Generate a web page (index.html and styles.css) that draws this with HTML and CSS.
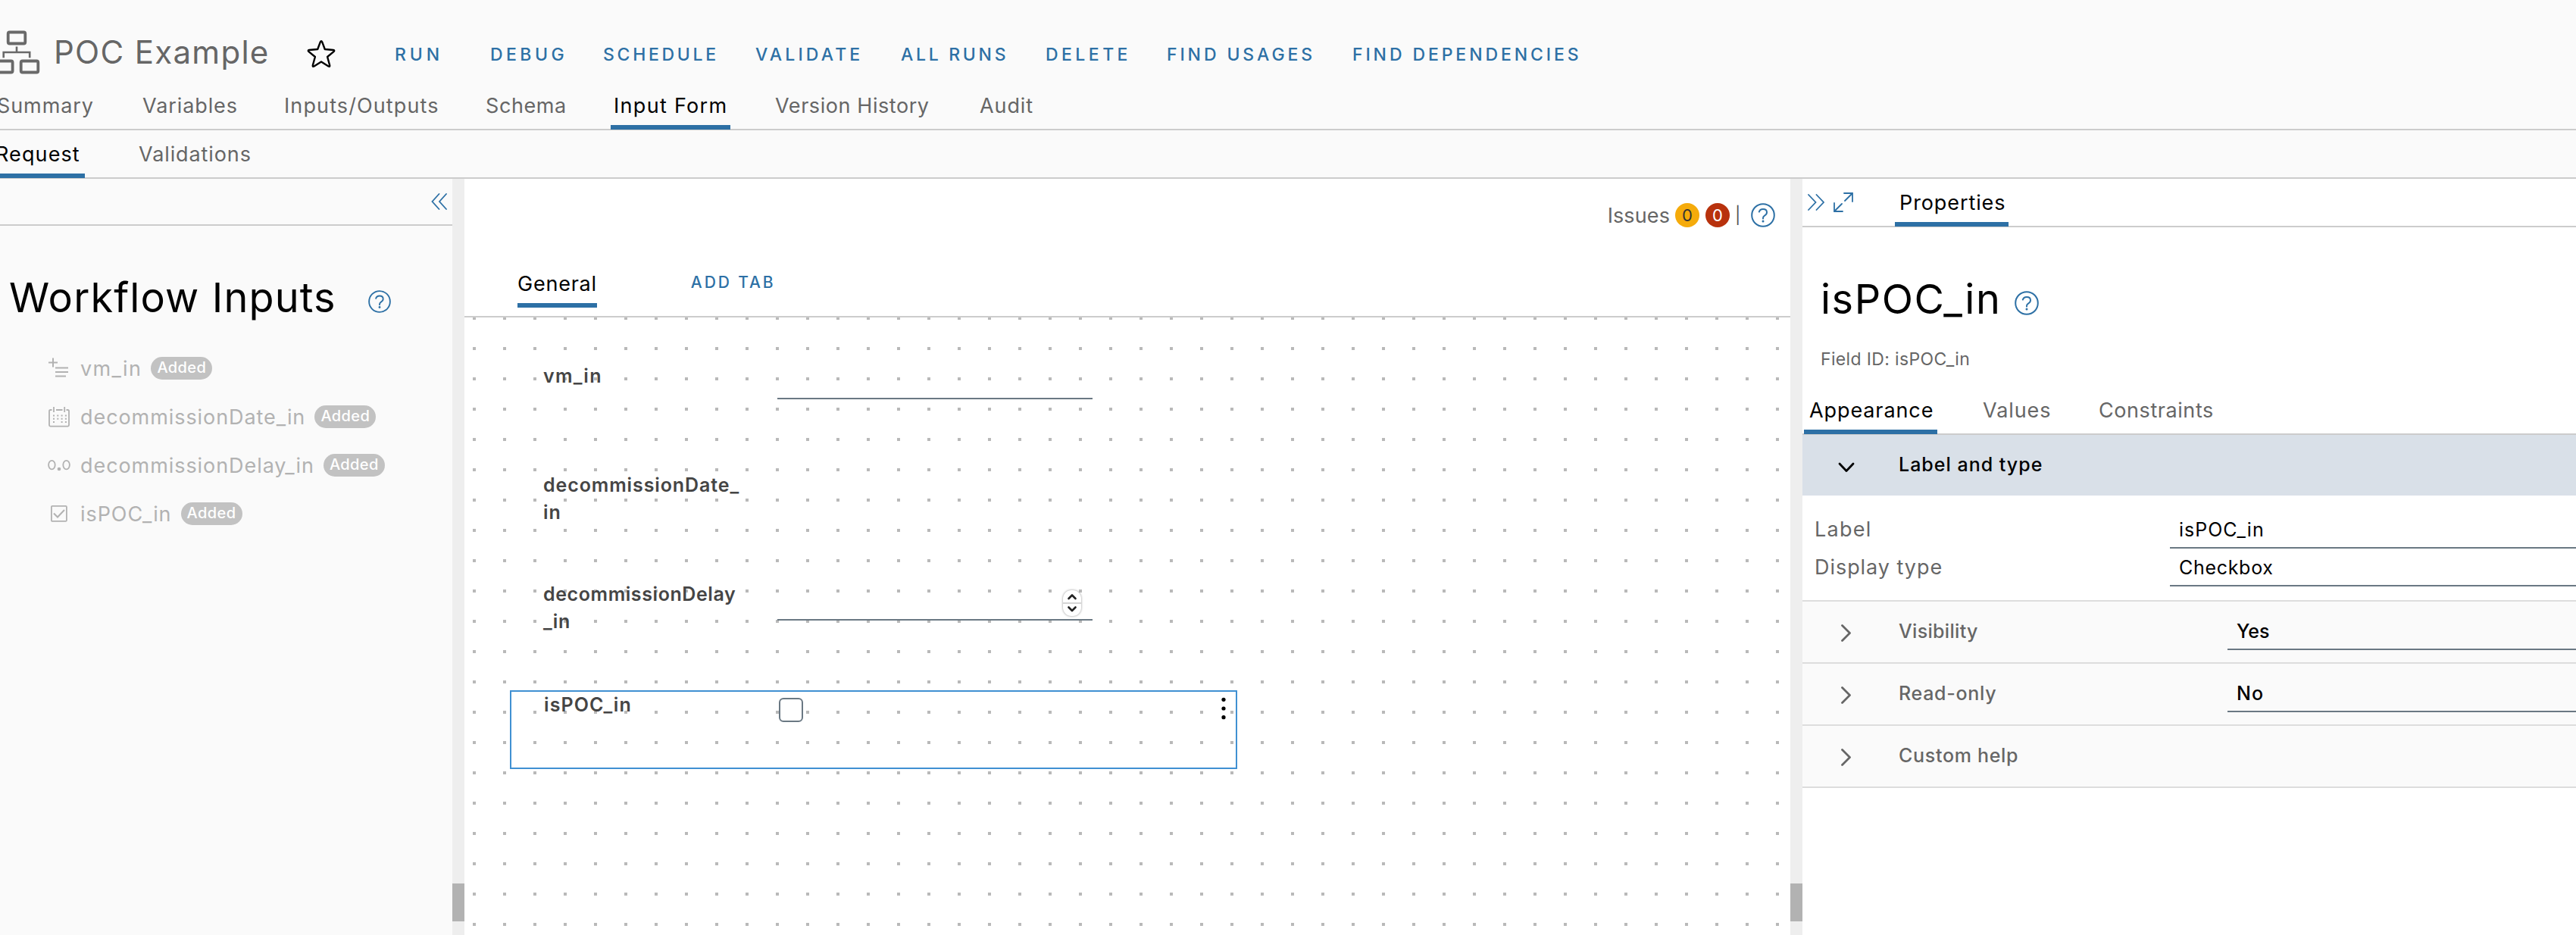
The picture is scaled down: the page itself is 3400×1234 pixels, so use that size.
FILE: index.html
```
<!DOCTYPE html>
<html lang="en">
<head>
<meta charset="utf-8">
<title>POC Example</title>
<link rel="stylesheet" href="styles.css">
</head>
<body>
<svg class="defs" width="0" height="0">
  <symbol id="help" viewBox="0 0 32 32">
    <circle cx="16" cy="16" r="14.8" fill="none" stroke="currentColor" stroke-width="2"/>
    <path d="M10.8 11.6C11.6 9 13.6 8 16 8c3 0 5 1.800 5 4.300 0 2.200-1.200 3.300-3 4.300-1.400.8-2 1.600-2 3.200v.7" fill="none" stroke="currentColor" stroke-width="2" stroke-linecap="round"/>
    <circle cx="16" cy="24" r="1.500" fill="currentColor"/>
  </symbol>
  <symbol id="next" viewBox="0 0 14 23">
    <path d="M1.500 1.500l10 10-10 10" fill="none" stroke="currentColor" stroke-width="2.800" stroke-linecap="round" stroke-linejoin="round"/>
  </symbol>
</svg>

<header class="header">
  <div class="title-row">
    <svg class="workflow-icon" viewBox="-10 37 64 62" fill="none" stroke="#696969" stroke-width="3.800">
      <rect x="10.700" y="41.500" width="22.600" height="15" rx="2"/>
      <rect x="-6" y="79.500" width="22.600" height="15" rx="2"/>
      <rect x="27.700" y="79.500" width="22.600" height="15" rx="2"/>
      <path d="M22 60.500v7.500M4.700 75.300V68h34.500v7.300" stroke-width="2.600"/>
    </svg>
    <h1 class="title">POC Example</h1>
    <svg class="star" viewBox="0 0 38 38" fill="none" stroke="#000" stroke-width="2.400" stroke-linejoin="round"><path d="M17.900 3.200q1.100-2.100 2.200 0L23.800 13l11.100 1q2.300.4.600 2.100l-8.400 6.900 3.100 11.300q.3 2.100-1.700 1.200L19 29.500l-9.500 6q-2 .9-1.700-1.200L10.900 23l-8.400-6.900q-1.700-1.700.6-2.100l11.100-1z"/></svg>
    <nav class="actions">
      <a class="run">RUN</a><a class="debug">DEBUG</a><a class="schedule">SCHEDULE</a><a class="validate">VALIDATE</a><a class="runs">ALL RUNS</a><a class="delete">DELETE</a><a class="usages">FIND USAGES</a><a>FIND DEPENDENCIES</a>
    </nav>
  </div>
  <nav class="tabs main-tabs">
    <a>Summary</a><a>Variables</a><a class="wide">Inputs/Outputs</a><a class="narrow">Schema</a><a class="active wider">Input Form</a><a class="narrow">Version History</a><a>Audit</a>
  </nav>
  <nav class="tabs sub-tabs"><a class="active wide">Request</a><a>Validations</a></nav>
</header>

<main class="body">
  <aside class="inputs">
    <div class="inputs-head">
      <svg class="collapse" viewBox="0 0 21 22" fill="none" stroke="#2d70a5" stroke-width="1.800" stroke-linecap="round"><path d="M10.500 1L1.500 11l9 10M20 1l-9 10 9 10"/></svg>
    </div>
    <div class="inputs-title"><h2>Workflow Inputs</h2><svg class="help"><use href="#help"/></svg></div>
    <ul class="input-list">
      <li class="vm"><svg viewBox="0 0 30 30" fill="none" stroke="currentColor" stroke-width="2"><path d="M1 7.500h12M7 1.500v12M10 14.500h17M10 20h17M10 25.500h14"/></svg><span>vm_in</span><b>Added</b></li>
      <li><svg viewBox="0 0 30 30" fill="none" stroke="currentColor" stroke-width="1.800"><path d="M5.500 6H3.500Q2 6 2 7.500v18.600Q2 27.600 3.500 27.600h23q1.500 0 1.500-1.500V7.500Q28 6 26.500 6h-2M11 6h8.500M8 2v7M22.200 2v7"/><path d="M7 13.500h18M7 17.800h18M7 22h2M17.600 22h8" stroke-dasharray="2 3.300" stroke-width="2"/></svg><span>decommissionDate_in</span><b>Added</b></li>
      <li><svg viewBox="0 0 30 30" fill="none" stroke="currentColor" stroke-width="1.800"><ellipse cx="5.400" cy="14.600" rx="4.300" ry="5.800"/><ellipse cx="24.600" cy="14.600" rx="4.300" ry="5.800"/><circle cx="15" cy="20" r="2.300" fill="currentColor" stroke="none"/></svg><span>decommissionDelay_in</span><b>Added</b></li>
      <li><svg viewBox="0 0 30 30" fill="none" stroke="currentColor" stroke-width="1.800"><rect x="4.900" y="4.900" width="20" height="20" rx="1.200"/><path d="M8 14.500l5 5 9-9.500" stroke-width="2"/></svg><span>isPOC_in</span><b>Added</b></li>
    </ul>
  </aside>
  <div class="splitter"><i></i></div>

  <section class="designer">
    <div class="issues">
      <span class="issues-label">Issues</span><b class="count warn">0</b><b class="count error">0</b><span class="bar">|</span><svg class="help"><use href="#help"/></svg>
    </div>
    <div class="page-tabs"><a class="general">General</a><a class="add">ADD TAB</a></div>
    <div class="canvas">
      <div class="field vm-field"><label>vm_in</label><div class="line"></div></div>
      <div class="field"><label>decommissionDate_<br>in</label></div>
      <div class="field delay-field"><label>decommissionDelay<br>_in</label>
        <div class="line"><svg class="spinner" viewBox="0 0 24 34" fill="none" stroke="#222" stroke-width="2.600" stroke-linecap="round" stroke-linejoin="round"><path d="M0 17h24" stroke="#d4d4d4" stroke-width="2"/><path d="M7.500 11l4.500-4.500 4.500 4.500M7.500 22.500l4.500 4.500 4.500-4.500"/></svg></div>
      </div>
      <div class="field selected"><label>isPOC_in</label><i class="checkbox"></i>
        <svg class="menu" viewBox="0 0 6 30"><circle cx="3" cy="3.300" r="2.600"/><circle cx="3" cy="15" r="2.600"/><circle cx="3" cy="26.700" r="2.600"/></svg>
      </div>
    </div>
  </section>
  <div class="splitter"><i></i></div>

  <aside class="props">
    <div class="props-head tabs">
      <svg class="expand-right" viewBox="0 0 22 22" fill="none" stroke="#2d70a5" stroke-width="1.800" stroke-linecap="round"><path d="M1 1l9.500 10L1 21M11.500 1L21 11l-9.500 10"/></svg>
      <svg class="resize" viewBox="0 0 26 26" fill="none" stroke="#2d70a5" stroke-width="1.800" stroke-linecap="round"><path d="M14 1h11v11M25 1L15 11M1 14v11h11M1 25l10-10"/></svg>
      <a class="active">Properties</a>
    </div>
    <div class="props-title"><h2>isPOC_in</h2><svg class="help"><use href="#help"/></svg></div>
    <p class="field-id">Field ID: isPOC_in</p>
    <nav class="tabs props-tabs"><a class="active">Appearance</a><a>Values</a><a class="narrow">Constraints</a></nav>
    <div class="group open">
      <svg class="down" viewBox="0 0 22 14"><path d="M2 2l9 9.500L20 2" fill="none" stroke="#000" stroke-width="2.800" stroke-linecap="round" stroke-linejoin="round"/></svg>
      <span>Label and type</span>
    </div>
    <div class="details">
      <label class="first">Label</label><div class="value id">isPOC_in</div>
      <label>Display type</label><div class="value">Checkbox</div>
    </div>
    <div class="group vis"><svg class="next"><use href="#next"/></svg><span>Visibility</span><div class="value">Yes</div></div>
    <div class="group"><svg class="next"><use href="#next"/></svg><span>Read-only</span><div class="value no">No</div></div>
    <div class="group last"><svg class="next"><use href="#next"/></svg><span>Custom help</span></div>
  </aside>
</main>
</body>
</html>
```
FILE: styles.css
```
* { box-sizing: border-box; }
body { margin: 0; width: 3400px; height: 1234px; overflow: hidden; background: #fafafa; color: #666; font: 400 27px/36px Inter, "Open Sans", sans-serif; letter-spacing: .9px; font-feature-settings: "calt" 0; }
h1, h2, p, ul { margin: 0; padding: 0; font-weight: 400; }
svg { display: block; flex: none; }
a, span, b, label, h1, h2 { white-space: nowrap; flex: none; }
.defs { position: absolute; }

/* Header */
.title-row { display: flex; align-items: center; height: 112px; padding-top: 25px; }
.workflow-icon { width: 64px; height: 62px; margin-left: -10px; }
.title { width: 332px; margin-left: 17px; font-size: 42px; line-height: 50px; letter-spacing: 1.3px; }
.star { width: 38px; height: 38px; margin: 5px 0 0 2px; }
.actions { display: grid; grid-template-columns: 126px 149px 201px 192px 191px 160px 245px auto; margin: 6px 0 0 78px; color: #2d70a5; font-size: 23px; font-weight: 500; letter-spacing: 3.900px; }
.run { letter-spacing: 4.900px; }
.debug, .delete { letter-spacing: 4.450px; }
.schedule, .runs { letter-spacing: 3.700px; }
.validate { letter-spacing: 4.140px; }
.tabs { border-bottom: 2px solid #ccc; }
.tabs a { justify-self: start; margin-bottom: -1px; border-bottom: 6px solid transparent; }
.tabs a.active { color: #000; border-color: #2d70a5; }
.tabs a.wide { letter-spacing: 1.110px; }
.tabs a.wider { letter-spacing: 1.300px; }
.tabs a.narrow { letter-spacing: .570px; }
.main-tabs { display: grid; grid-template-columns: 192px 187px 266px 169px 213px 270px auto; height: 60px; margin-left: -8px; }
.main-tabs a { height: 59px; padding: 0 4px; line-height: 56px; }
.sub-tabs { display: grid; grid-template-columns: 189px auto; height: 64px; margin-left: -12px; }
.sub-tabs a { height: 63px; padding: 0 6px; line-height: 64px; }

/* Body columns */
.body { display: grid; grid-template-columns: 597px 16px 1750px 16px 1021px; height: 998px; }
.splitter { padding-top: 930px; background: #eee; }
.splitter i { display: block; height: 50px; background: #b2b2b2; }
.help { width: 32px; height: 32px; color: #2d70a5; }

/* Workflow inputs */
.inputs-head { display: flex; align-items: center; justify-content: flex-end; height: 62px; padding-right: 7px; border-bottom: 2px solid #ccc; }
.collapse { width: 21px; height: 22px; }
.inputs-title { display: flex; align-items: center; height: 60px; margin: 64px 0 32px 12px; }
.inputs-title h2 { width: 474px; color: #000; font-size: 54px; line-height: 60px; padding-top: 2px; letter-spacing: 1.140px; }
.inputs-title .help { width: 30px; height: 30px; margin-top: 12px; }
.input-list { list-style: none; color: #b2b2b2; letter-spacing: .930px; }
.input-list li { display: flex; align-items: center; height: 64px; padding-left: 63px; }
.input-list svg { width: 30px; height: 30px; margin-right: 13px; }
.input-list span { padding-top: 2px; }
.input-list .vm { letter-spacing: 1.350px; }
.input-list b { width: 81px; height: 30px; margin-left: 12px; border-radius: 15px; background: #c2c2c2; color: #fff; font-size: 20px; font-weight: 500; line-height: 29px; letter-spacing: .380px; text-align: center; }

/* Form designer */
.designer { display: flex; flex-direction: column; background: #fff; }
.issues { display: flex; align-items: center; justify-content: flex-end; height: 64px; margin-top: 16px; padding-right: 20px; }
.issues-label { letter-spacing: .110px; margin-right: 7px; padding-top: 2px; }
.count { width: 32px; height: 32px; border-radius: 50%; font-size: 22px; font-weight: 400; line-height: 32px; letter-spacing: 0; text-align: center; }
.warn { margin-right: 8px; background: #f5ab0b; color: #333; }
.error { background: #b8320d; color: #fff; }
.bar { width: 28px; padding-left: 7px; color: #555; font-size: 22px; }
.page-tabs { display: flex; height: 103px; padding: 32px 0 0 70px; border-bottom: 2px solid #ccc; }
.general { height: 58px; border-bottom: 6px solid #2d70a5; color: #000; line-height: 54px; letter-spacing: .770px; }
.add { margin-left: 124px; color: #2d70a5; font-size: 21px; font-weight: 500; line-height: 49px; letter-spacing: 2.900px; }
.canvas { flex: 1; padding: 60px 0 0 60px; background: linear-gradient(to right, transparent 4px, #fff 4px) 11px -1px / 40px 40px, linear-gradient(#b9b9b9 4px, #fff 4px) 11px -1px / 40px 40px; }
.field { display: flex; align-items: flex-start; position: relative; width: 960px; height: 104px; margin-bottom: 40px; border: 2px solid transparent; color: #454545; font-size: 25px; font-weight: 600; }
.field label { width: 351px; margin-top: -3px; padding-left: 42px; }
.vm-field label { letter-spacing: 1.300px; }
.delay-field label { letter-spacing: .590px; }
.line { width: 416px; height: 46px; border-bottom: 2px solid #6a7883; }
.delay-field .line { height: 50px; padding: 10px 15px 0; }
.spinner { width: 24px; height: 34px; margin-left: auto; border-radius: 11px; background: #fff; box-shadow: 0 0 3px rgba(0, 0, 0, .45); }
.selected { border-color: #4090d2; }
.selected label { margin-top: -1px; padding-left: 43px; letter-spacing: 1.090px; }
.checkbox { width: 32px; height: 32px; margin: 8px 0 0 2px; border: 2px solid #6a7883; border-radius: 6px; background: #fff; }
.menu { position: absolute; top: 7px; right: 13px; width: 6px; height: 30px; }

/* Properties */
.props { background: #fff; }
.props-head { display: flex; align-items: center; height: 64px; padding-left: 7px; }
.props-head a { height: 63px; margin-left: 55px; padding: 0 4px 0 6px; line-height: 64px; align-self: flex-start; }
.expand-right { width: 22px; height: 22px; }
.resize { width: 26px; height: 26px; margin-left: 12px; }
.props-title { display: flex; align-items: center; height: 60px; margin: 64px 0 32px 24px; }
.props-title h2 { width: 256px; color: #000; font-size: 54px; line-height: 60px; padding-top: 1px; letter-spacing: 1.540px; }
.props-title .help { margin-top: 12px; }
.field-id { margin: 0 0 22px 24px; font-size: 23px; letter-spacing: .350px; }
.props-tabs { display: grid; grid-template-columns: 229px 153px auto; height: 60px; padding-left: 2px; }
.props-tabs a { height: 59px; padding: 0 5px 0 7px; line-height: 55px; }
.group { display: grid; grid-template-columns: 127px 434px 1fr; height: 82px; border-top: 2px solid #ddd; background: #fafafa; font-size: 25px; font-weight: 500; letter-spacing: .700px; }
.group span { line-height: 79px; }
.open { height: 80px; border: 0; background: #d9e0e8; color: #000; letter-spacing: 1px; }
.last { height: 84px; border-bottom: 2px solid #ddd; }
.vis { letter-spacing: .320px; }
.down { width: 22px; height: 14px; margin: 36px 0 0 47px; }
.next { width: 14px; height: 23px; margin: 30px 0 0 51px; }
.value { height: 50px; padding-left: 12px; border-bottom: 2px solid #6a7883; color: #000; font-size: 25px; line-height: 50px; letter-spacing: .700px; }
.group .value { margin-top: 14px; letter-spacing: 0; }
.group .no { letter-spacing: 1px; }
.details { display: grid; grid-template-columns: 485px 1fr; height: 138px; padding-top: 20px; grid-auto-rows: 50px; }
.details label { padding-left: 16px; line-height: 50px; letter-spacing: .950px; }
.details .first { letter-spacing: 1.250px; }
.details .id { letter-spacing: 1px; }
```
